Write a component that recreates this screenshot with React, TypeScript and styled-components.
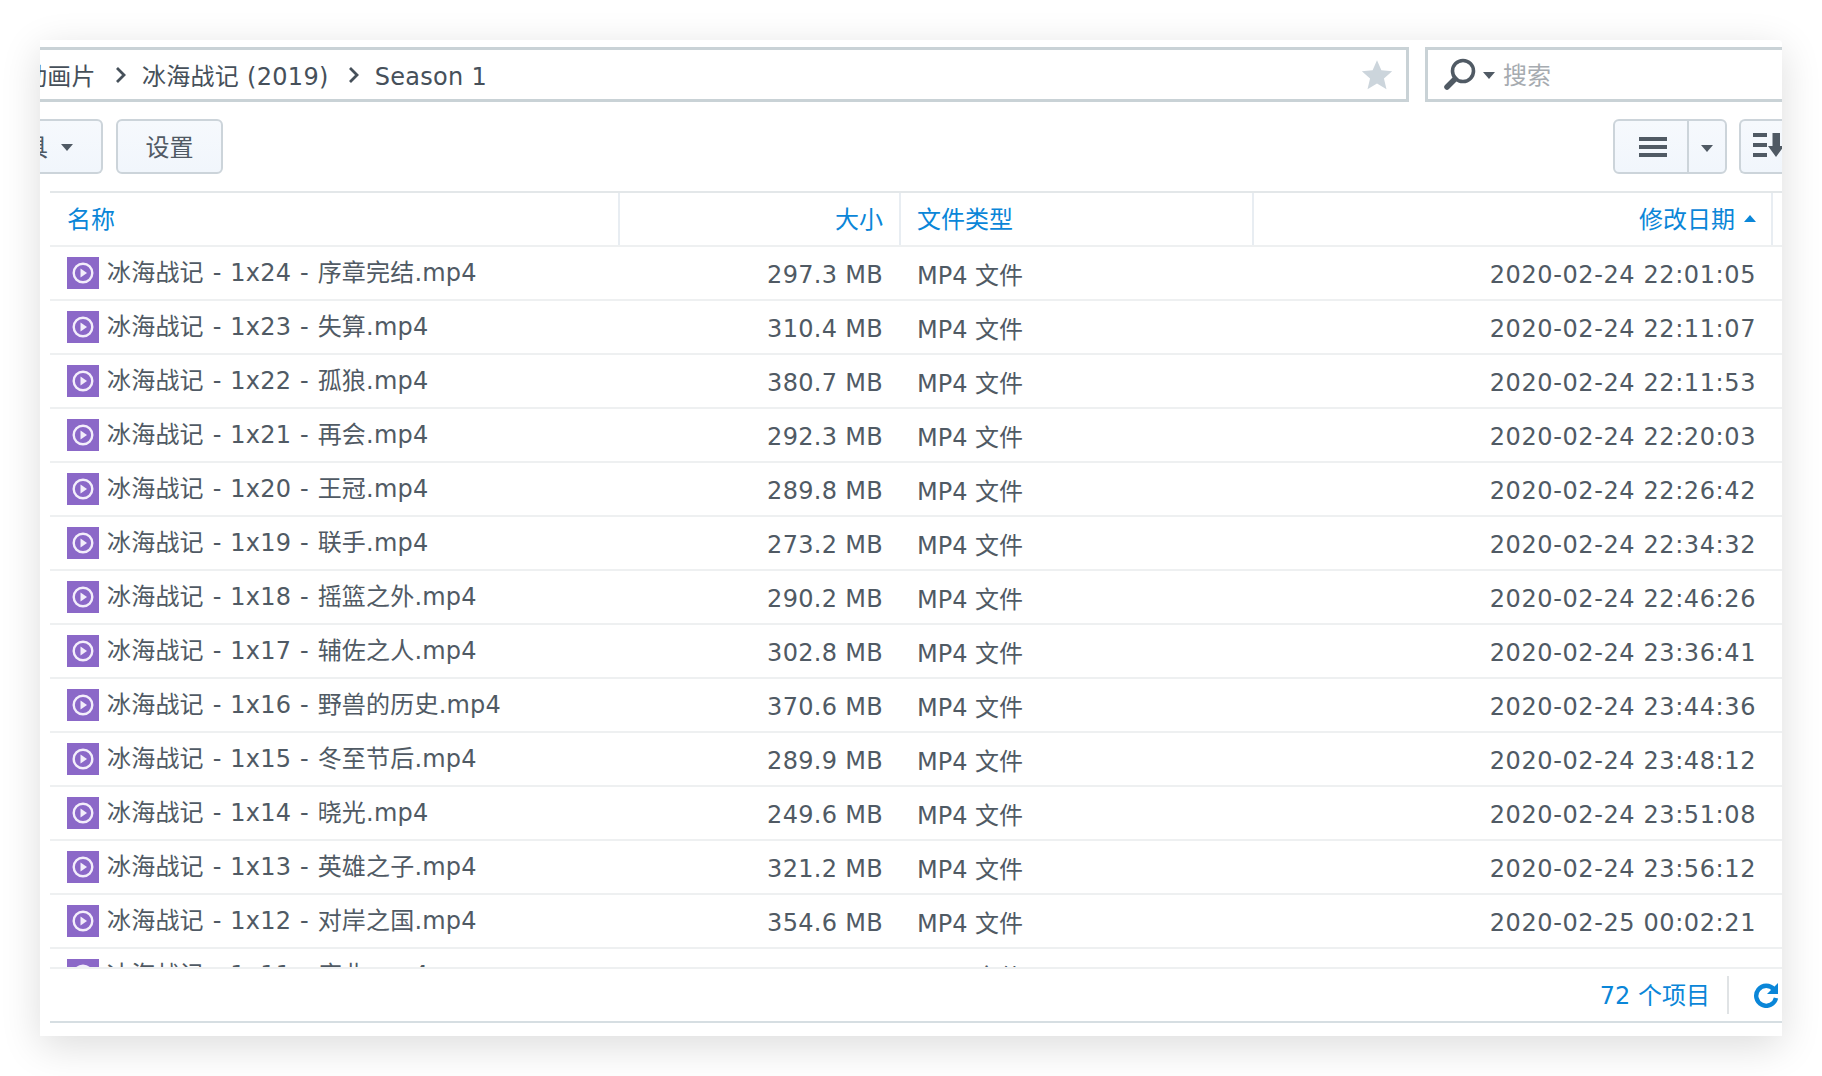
import React from 'react';
import styled, { createGlobalStyle } from 'styled-components';

const GlobalStyle = createGlobalStyle`
  html, body {
    margin: 0;
    padding: 0;
    background: #fff;
  }
  body {
    width: 1822px;
    height: 1076px;
    overflow: hidden;
    font-family: "DejaVu Sans", "Noto Sans CJK SC", sans-serif;
  }
`;

const Page = styled.div`
  padding: 40px 40px 40px 40px;
`;

const Window = styled.div`
  width: 1742px;
  height: 996px;
  background: #fff;
  overflow: hidden;
  border-radius: 0 4px 0 0;
  box-shadow: 0 10px 40px rgba(0, 0, 0, 0.14);
  display: flex;
  flex-direction: column;
`;

const AddressRow = styled.div`
  display: flex;
  gap: 16px;
  padding-top: 7px;
  height: 55px;
  flex-shrink: 0;
`;

const PathBar = styled.div`
  width: 1369px;
  box-sizing: border-box;
  border: solid #c9d2d6;
  border-width: 3px 3px 3px 0;
  display: flex;
  align-items: center;
  justify-content: space-between;
  padding-right: 12px;
  overflow: hidden;
`;

const Crumbs = styled.div`
  display: flex;
  align-items: baseline;
  margin-left: -17px;
  padding-bottom: 1px;
  color: #46505a;
  font-size: 24px;
  letter-spacing: 0.3px;
  white-space: nowrap;
`;

const Chevron = styled.svg`
  width: 12px;
  height: 18px;
  margin: 2px 15px 0 19px;
  flex-shrink: 0;
  align-self: center;
`;

const SearchBox = styled.div`
  flex: 1;
  box-sizing: border-box;
  border: solid #c9d2d6;
  border-width: 3px 0 3px 3px;
  display: flex;
  align-items: center;
  padding-left: 15px;
`;

const SearchHint = styled.span`
  color: #a6abb0;
  font-size: 24px;
  margin-left: 8px;
  padding-bottom: 2px;
`;

const Caret = styled.svg<{ $ml?: number; $mt?: number }>`
  width: 12px;
  height: 7px;
  margin-left: ${p => p.$ml ?? 0}px;
  margin-top: ${p => p.$mt ?? 0}px;
  flex-shrink: 0;
`;

const Toolbar = styled.div`
  display: flex;
  align-items: center;
  justify-content: space-between;
  height: 55px;
  margin-top: 17px;
  flex-shrink: 0;
`;

const ToolGroup = styled.div<{ $gap: number }>`
  display: flex;
  align-items: stretch;
  gap: ${p => p.$gap}px;
  height: 100%;
`;

const Button = styled.div`
  width: 107px;
  box-sizing: border-box;
  border: 2px solid #ccd4da;
  border-radius: 6px;
  background: linear-gradient(#f6f9fd, #f1f6fc);
  color: #505a64;
  font-size: 24px;
  display: flex;
  align-items: center;
  justify-content: center;
  padding-bottom: 2px;
  overflow: hidden;
`;

const CutButton = styled(Button)`
  width: 63px;
  border-left: none;
  border-radius: 0 6px 6px 0;
  justify-content: flex-start;
`;

const CutLabel = styled.span`
  margin-left: -16px;
  margin-right: 13px;
`;

const SortButton = styled(Button)`
  width: 43px;
  border-right: none;
  border-radius: 6px 0 0 6px;
  justify-content: flex-start;
  align-items: flex-start;
  padding: 11px 0 0 12px;
`;

const SortIcon = styled.svg`
  width: 44px;
  height: 26px;
  flex-shrink: 0;
`;

const SplitButton = styled.div`
  width: 114px;
  box-sizing: border-box;
  border: 2px solid #ccd4da;
  border-radius: 6px;
  background: linear-gradient(#f6f9fd, #f1f6fc);
  display: grid;
  grid-template-columns: 74px 1fr;
`;

const SplitMain = styled.div`
  display: flex;
  align-items: center;
  justify-content: center;
  padding-left: 3px;
  border-right: 2px solid #ccd4da;
`;

const SplitSide = styled.div`
  display: flex;
  align-items: center;
  justify-content: center;
`;

const Table = styled.div`
  margin: 17px 0 0 10px;
  flex: 1;
  min-height: 0;
  display: flex;
  flex-direction: column;
`;

const columns = '570px 281px 353px 1fr';

const HeaderRow = styled.div`
  display: grid;
  grid-template-columns: ${columns};
  height: 56px;
  box-sizing: border-box;
  border-top: 2px solid #e3e7e9;
  border-bottom: 2px solid #eef0f1;
  flex-shrink: 0;
`;

const HeaderCell = styled.div<{ $right?: boolean; $edge?: boolean; $left?: number }>`
  display: flex;
  align-items: center;
  justify-content: ${p => (p.$right ? 'flex-end' : 'flex-start')};
  padding: ${p => (p.$edge ? '0 15px 4px 0' : p.$right ? '0 16px 4px 0' : `0 0 4px ${p.$left ?? 17}px`)};
  margin-right: ${p => (p.$edge ? '9px' : '0')};
  border-right: 2px solid #e8edf2;
  color: #0a86d8;
  font-size: 24px;
`;

const List = styled.div`
  flex: 1;
  min-height: 0;
  overflow: hidden;
`;

const Row = styled.div`
  display: grid;
  grid-template-columns: ${columns};
  height: 54px;
  box-sizing: border-box;
  border-bottom: 2px solid #eef0f1;
  align-items: center;
  color: #505a64;
  font-size: 24px;
  white-space: nowrap;
`;

const NameCell = styled.div`
  display: flex;
  align-items: center;
  gap: 8px;
  padding: 0 0 1px 17px;
  letter-spacing: 0.2px;
  word-spacing: 1px;
`;

const NameText = styled.span`
  padding-bottom: 5px;
`;

const FileIcon = styled.svg`
  width: 32px;
  height: 32px;
  flex-shrink: 0;
`;

const SizeCell = styled.div`
  text-align: right;
  padding: 3px 18px 0 0;
  letter-spacing: 0.3px;
`;

const TypeCell = styled.div`
  padding-left: 16px;
`;

const DateCell = styled.div`
  text-align: right;
  padding: 3px 26px 0 0;
  letter-spacing: 0.6px;
`;

const Footer = styled.div`
  height: 56px;
  box-sizing: border-box;
  border-top: 2px solid #eef0f1;
  border-bottom: 2px solid #d6dee2;
  display: flex;
  align-items: center;
  justify-content: flex-end;
  flex-shrink: 0;
  margin-bottom: 13px;
`;

const Count = styled.span`
  color: #0a86d8;
  font-size: 24px;
  padding-bottom: 3px;
`;

const FooterDivider = styled.div`
  width: 2px;
  height: 38px;
  background: #e0e3e5;
  margin: 0 24px 0 17px;
`;

const RefreshIcon = styled.svg`
  width: 26px;
  height: 26px;
  margin-right: 3px;
  flex-shrink: 0;
`;

const DownCaret = ({ ml, mt }: { ml?: number; mt?: number }) => (
  <Caret $ml={ml} $mt={mt} viewBox="0 0 12 7">
    <path d="M0 0h12L6 7z" fill="#505a64" />
  </Caret>
);

const Sep = () => (
  <Chevron viewBox="0 0 12 18">
    <path d="M2 2l7 7-7 7" fill="none" stroke="#46505a" strokeWidth="2.8" />
  </Chevron>
);

const files = [
  ['1x24', '序章完结', '297.3 MB', '2020-02-24 22:01:05'],
  ['1x23', '失算', '310.4 MB', '2020-02-24 22:11:07'],
  ['1x22', '孤狼', '380.7 MB', '2020-02-24 22:11:53'],
  ['1x21', '再会', '292.3 MB', '2020-02-24 22:20:03'],
  ['1x20', '王冠', '289.8 MB', '2020-02-24 22:26:42'],
  ['1x19', '联手', '273.2 MB', '2020-02-24 22:34:32'],
  ['1x18', '摇篮之外', '290.2 MB', '2020-02-24 22:46:26'],
  ['1x17', '辅佐之人', '302.8 MB', '2020-02-24 23:36:41'],
  ['1x16', '野兽的历史', '370.6 MB', '2020-02-24 23:44:36'],
  ['1x15', '冬至节后', '289.9 MB', '2020-02-24 23:48:12'],
  ['1x14', '晓光', '249.6 MB', '2020-02-24 23:51:08'],
  ['1x13', '英雄之子', '321.2 MB', '2020-02-24 23:56:12'],
  ['1x12', '对岸之国', '354.6 MB', '2020-02-25 00:02:21'],
  ['1x11', '序曲', '288.4 MB', '2020-02-25 00:10:17'],
];

export default function App() {
  return (
    <Page>
      <GlobalStyle />
      <Window>
        <AddressRow>
          <PathBar>
            <Crumbs>
              <span>动画片</span>
              <Sep />
              <span>冰海战记 (2019)</span>
              <Sep />
              <span>Season 1</span>
            </Crumbs>
            <svg width="34" height="34" viewBox="0 0 24 24">
              <path d="M12 1.5l3.1 7.2 7.6.7-5.8 5 1.8 7.6-6.7-4-6.7 4 1.8-7.6-5.8-5 7.6-.7z" fill="#ccd5dc" />
            </svg>
          </PathBar>
          <SearchBox>
            <svg width="34" height="34" viewBox="0 0 34 34">
              <circle cx="20" cy="13" r="10.5" fill="none" stroke="#505a64" strokeWidth="3.6" />
              <path d="M12 21l-8 8" stroke="#505a64" strokeWidth="5.5" strokeLinecap="round" />
            </svg>
            <DownCaret ml={6} mt={2} />
            <SearchHint>搜索</SearchHint>
          </SearchBox>
        </AddressRow>

        <Toolbar>
          <ToolGroup $gap={13}>
            <CutButton>
              <CutLabel>具</CutLabel>
              <DownCaret mt={4} />
            </CutButton>
            <Button>设置</Button>
          </ToolGroup>
          <ToolGroup $gap={12}>
            <SplitButton>
              <SplitMain>
                <svg width="28" height="20" viewBox="0 0 28 20">
                  <path d="M0 0h28v4H0zM0 8h28v4H0zM0 16h28v4H0z" fill="#505a64" />
                </svg>
              </SplitMain>
              <SplitSide>
                <DownCaret mt={4} />
              </SplitSide>
            </SplitButton>
            <SortButton>
              <SortIcon viewBox="0 0 44 26">
                <path d="M0 1h14v4H0zM0 11h14v4H0zM0 21h14v4H0z" fill="#505a64" />
                <path d="M19.5 1H27v13h4L23 25 15 14h4.5z" fill="#505a64" />
              </SortIcon>
            </SortButton>
          </ToolGroup>
        </Toolbar>

        <Table>
          <HeaderRow>
            <HeaderCell>名称</HeaderCell>
            <HeaderCell $right>大小</HeaderCell>
            <HeaderCell $left={16}>文件类型</HeaderCell>
            <HeaderCell $right $edge>
              修改日期
              <Caret $ml={9} $mt={3} viewBox="0 0 12 7">
                <path d="M0 7h12L6 0z" fill="#0a86d8" />
              </Caret>
            </HeaderCell>
          </HeaderRow>
          <List>
            {files.map(([ep, title, size, date]) => (
              <Row key={ep}>
                <NameCell>
                  <FileIcon viewBox="0 0 32 32">
                    <rect width="32" height="32" fill="#8b68c8" />
                    <circle cx="16" cy="16" r="9.3" fill="none" stroke="#f3eefb" strokeWidth="2.4" />
                    <path d="M13.5 11.5l6.5 4.5-6.5 4.5z" fill="#f3eefb" />
                  </FileIcon>
                  <NameText>{`冰海战记 - ${ep} - ${title}.mp4`}</NameText>
                </NameCell>
                <SizeCell>{size}</SizeCell>
                <TypeCell>MP4 文件</TypeCell>
                <DateCell>{date}</DateCell>
              </Row>
            ))}
          </List>
          <Footer>
            <Count>72 个项目</Count>
            <FooterDivider />
            <RefreshIcon viewBox="0 0 26 26">
              <path d="M21 7.5A10 10 0 1 0 23 16" fill="none" stroke="#0a86d8" strokeWidth="4.4" />
              <path d="M25 1v11H14z" fill="#0a86d8" />
            </RefreshIcon>
          </Footer>
        </Table>
      </Window>
    </Page>
  );
}
